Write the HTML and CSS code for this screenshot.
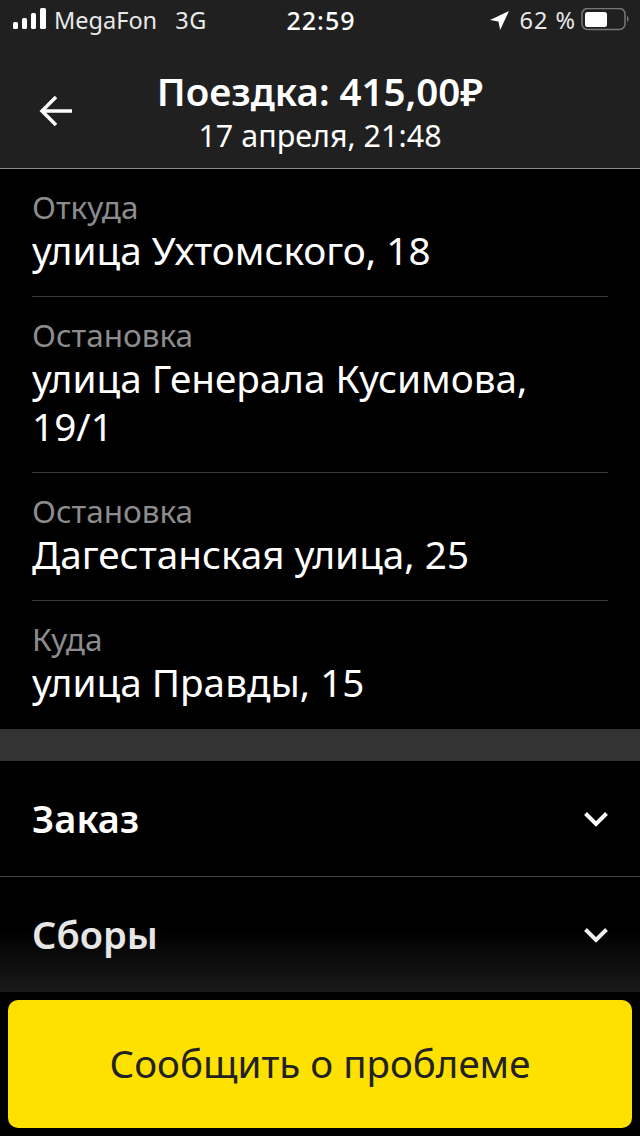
FILE: index.html
```html
<!DOCTYPE html>
<html lang="ru">
<head>
<meta charset="utf-8">
<title>Поездка</title>
<link rel="stylesheet" href="styles.css">
</head>
<body>
<div class="screen">
  <header class="top">
    <div class="status">
      <div class="status-left">
        <svg class="signal" width="34" height="22" viewBox="0 0 34 22"><rect x="0" y="14" width="5" height="7" rx="1.500"/><rect x="9" y="10" width="5" height="11" rx="1.500"/><rect x="18" y="5" width="5" height="16" rx="1.500"/><rect x="27" y="0" width="6" height="21" rx="1.500"/></svg>
        <span class="carrier">MegaFon</span>
        <span class="net">3G</span>
      </div>
      <div class="clock">22:59</div>
      <div class="status-right">
        <svg class="loc" width="18" height="18" viewBox="0 0 18 18"><path d="M18 0 0 8.500l8 1.500 1.600 8z"/></svg>
        <span class="pct">62 %</span>
        <svg class="battery" width="48" height="24" viewBox="0 0 48 24"><rect x="1" y=".5" width="43" height="21" rx="5.500" fill="none" stroke="#777" stroke-width="1.500"/><rect x="4" y="4" width="22" height="15" rx="2.500" fill="#fff"/><path d="M46 8c1.200.5 1.500 1.600 1.500 3s-.3 2.500-1.500 3z" fill="#777"/></svg>
      </div>
    </div>
    <div class="nav">
      <svg class="back" width="34" height="32" viewBox="0 0 34 32"><path d="M33 16H3M17 2 3 16l14 14" fill="none" stroke="#fff" stroke-width="3.500"/></svg>
      <div class="title">
        <div class="title-main">Поездка: 415,00₽</div>
        <div class="title-sub">17 апреля, 21:48</div>
      </div>
    </div>
  </header>
  <section class="route">
    <div class="stop"><div class="stop-label">Откуда</div><div class="stop-value">улица Ухтомского, 18</div></div>
    <div class="stop"><div class="stop-label">Остановка</div><div class="stop-value">улица Генерала Кусимова, 19/1</div></div>
    <div class="stop"><div class="stop-label">Остановка</div><div class="stop-value">Дагестанская улица, 25</div></div>
    <div class="stop"><div class="stop-label">Куда</div><div class="stop-value">улица Правды, 15</div></div>
  </section>
  <div class="band"></div>
  <section class="groups">
    <div class="group"><span class="group-name">Заказ</span><svg class="chev" width="26" height="18" viewBox="0 0 26 18"><path d="M2.500 3.500 13 14 23.500 3.500" fill="none" stroke="#fff" stroke-width="4"/></svg></div>
    <div class="group group-faded"><span class="group-name">Сборы</span><svg class="chev" width="26" height="18" viewBox="0 0 26 18"><path d="M2.500 3.500 13 14 23.500 3.500" fill="none" stroke="#eee" stroke-width="4"/></svg></div>
  </section>
  <footer class="foot"><button class="report">Сообщить о проблеме</button></footer>
</div>
</body>
</html>
```
FILE: styles.css
```css
* { box-sizing: border-box; }
html, body { margin: 0; background: #000; }
.screen { width: 640px; height: 1136px; overflow: hidden; display: flex; flex-direction: column; background: #000; color: #fff; font-family: "Noto Sans", "Open Sans", sans-serif; }
.top { height: 169px; background: #202020; border-bottom: 1px solid #8a8a8a; flex: none; }
.status { height: 40px; padding: 0 11px 0 13px; display: grid; grid-template-columns: 1fr auto 1fr; align-items: center; font-size: 23.5px; color: #e8e8e8; }
.status-left { display: flex; align-items: center; }
.signal { fill: #fff; margin-right: 7px; margin-top: -3px; }
.net { margin-left: 18px; letter-spacing: .6px; }
.clock { font-weight: 500; color: #fff; font-size: 25px; letter-spacing: 1px; }
.status-right { display: flex; align-items: center; justify-content: flex-end; }
.loc { fill: #fff; margin-right: 10px; width: 19px; height: 19px; }
.pct { margin-right: 5px; letter-spacing: 1px; }
.nav { position: relative; height: 128px; display: flex; align-items: center; justify-content: center; }
.back { position: absolute; left: 39px; top: 55px; }
.title { text-align: center; margin-top: 13px; }
.title-main { font-size: 38.5px; font-weight: 600; line-height: 48px; }
.title-sub { font-size: 30.5px; line-height: 40px; }
.route { flex: none; padding: 0 32px; }
.stop { padding: 19px 0 20px; border-bottom: 1px solid #3a3a3a; }
.stop:last-child { border-bottom: 0; padding-bottom: 21px; }
.stop-label { font-size: 31.5px; line-height: 38px; color: #8c8c8c; }
.stop-value { font-size: 38.7px; line-height: 48px; padding-bottom: 2px; color: #fff; }
.band { height: 32px; flex: none; background: #333; }
.groups { flex: none; background: linear-gradient(#000 170px, #1a1a1a 231px); height: 231px; }
.group { height: 115px; padding: 0 31px 0 32px; display: flex; align-items: center; justify-content: space-between; font-size: 38px; font-weight: 600; color: #fff; }
.group:first-child { height: 116px; border-bottom: 1px solid #444; }
.group-name { padding-bottom: 2px; }
.group-faded { color: #e6e6e6; }
.foot { flex: 1; padding: 8px; background: #000; }
.report { width: 100%; height: 128px; padding: 0 0 2px; border: 0; border-radius: 10px; background: #ffe100; color: #222; font: 38.5px "Noto Sans", "Open Sans", sans-serif; }
```
